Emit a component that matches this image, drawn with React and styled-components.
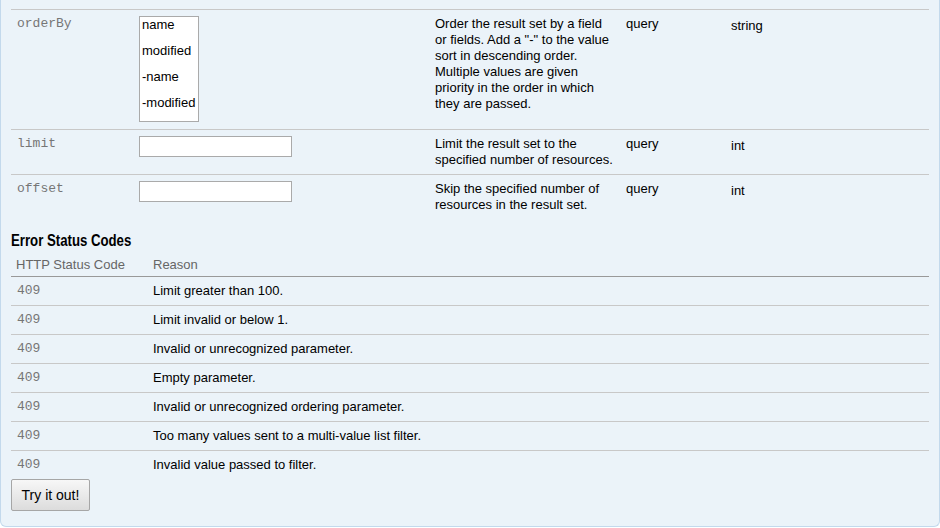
import React from 'react'
import styled, { createGlobalStyle } from 'styled-components'

const GlobalStyle = createGlobalStyle`
	html, body {
		margin: 0;
		padding: 0;
		background: #fff;
	}
	body {
		font-family: 'Liberation Sans', Arial, sans-serif;
		font-size: 13px;
		color: #000;
	}
`

const Panel = styled.div`
	width: 940px;
	box-sizing: border-box;
	background: #ebf3f9;
	border: 1px solid #c3d9ec;
	border-top: none;
	border-radius: 0 0 6px 6px;
	padding: 9px 10px 15px 10px;
`

const ParamRow = styled.div`
	display: grid;
	grid-template-columns: 122px 296px 191px 105px 1fr;
	border-top: 1px solid #c8c8c8;
`

const Cell = styled.div`
	padding: ${props => (props.$low ? '8px' : '6px')} 6px 6px 6px;
	line-height: 16px;
	font-size: 13px;
	color: #000;
`

const Code = styled.code`
	display: inline-block;
	vertical-align: top;
	line-height: 16px;
	font-family: 'Liberation Mono', 'Courier New', monospace;
	font-size: 13px;
	color: #767676;
`

const ListBox = styled.div`
	width: 58px;
	background: #fff;
	border: 1px solid #aaa;
	margin-bottom: 1px;
`

const Option = styled.div`
	padding: 0 2px 10px 2px;
	line-height: 16px;
	font-size: 13px;
	color: #000;
	white-space: nowrap;
`

const TextInput = styled.input`
	display: block;
	width: 153px;
	height: 21px;
	box-sizing: border-box;
	border: 1px solid #aaa;
	background: #fff;
	margin: 0;
	padding: 1px 3px;
	font-family: 'Liberation Sans', Arial, sans-serif;
	font-size: 13px;
`

const Heading = styled.h4`
	margin: 13px 0 0 0;
	font-family: 'Liberation Sans', Arial, sans-serif;
	font-weight: bold;
	font-size: 16px;
	line-height: 18px;
	color: #000;
	transform: scaleX(0.825);
	transform-origin: left center;
	white-space: nowrap;
`

const StatusHead = styled.div`
	display: grid;
	grid-template-columns: 136px 1fr;
	border-bottom: 1px solid #999;
`

const HeadCell = styled.div`
	padding: 7px 5px 3px ${props => (props.$wide ? '6px' : '5px')};
	line-height: 16px;
	color: #666;
`

const StatusRow = styled.div`
	display: grid;
	grid-template-columns: 136px 1fr;
	border-top: ${props => (props.$first ? 'none' : '1px solid #c8c8c8')};
`

const StatusCell = styled.div`
	padding: 6px;
	height: 16px;
	line-height: 16px;
	color: #000;
`

const TryButton = styled.button`
	display: block;
	margin: 0;
	width: 79px;
	height: 32px;
	padding: 0;
	border: 1px solid #a6a6a6;
	border-radius: 2px;
	background: linear-gradient(#f7f7f7, #dcdcdc);
	font-family: 'Liberation Sans', Arial, sans-serif;
	font-size: 14px;
	color: #000;
	white-space: nowrap;
	cursor: pointer;
`

const params = [
	{
		name: 'orderBy',
		options: ['name', 'modified', '-name', '-modified'],
		desc: 'Order the result set by a field or fields. Add a "-" to the value sort in descending order. Multiple values are given priority in the order in which they are passed.',
		type: 'string'
	},
	{
		name: 'limit',
		desc: 'Limit the result set to the specified number of resources.',
		type: 'int'
	},
	{
		name: 'offset',
		desc: 'Skip the specified number of resources in the result set.',
		type: 'int'
	}
]

const errors = [
	'Limit greater than 100.',
	'Limit invalid or below 1.',
	'Invalid or unrecognized parameter.',
	'Empty parameter.',
	'Invalid or unrecognized ordering parameter.',
	'Too many values sent to a multi-value list filter.',
	'Invalid value passed to filter.'
]

function App() {
	return (
		<>
			<GlobalStyle />
			<Panel>
				{params.map(p => (
					<ParamRow key={p.name}>
						<Cell>
							<Code>{p.name}</Code>
						</Cell>
						<Cell>
							{p.options ? (
								<ListBox role='listbox'>
									{p.options.map(o => (
										<Option key={o}>{o}</Option>
									))}
								</ListBox>
							) : (
								<TextInput type='text' />
							)}
						</Cell>
						<Cell>{p.desc}</Cell>
						<Cell>query</Cell>
						<Cell $low>{p.type}</Cell>
					</ParamRow>
				))}

				<Heading>Error Status Codes</Heading>
				<StatusHead>
					<HeadCell>HTTP Status Code</HeadCell>
					<HeadCell $wide>Reason</HeadCell>
				</StatusHead>
				{errors.map((e, i) => (
					<StatusRow key={e} $first={i === 0}>
						<StatusCell>
							<Code>409</Code>
						</StatusCell>
						<StatusCell>{e}</StatusCell>
					</StatusRow>
				))}
				<TryButton type='button'>Try it out!</TryButton>
			</Panel>
		</>
	)
}

export default App
